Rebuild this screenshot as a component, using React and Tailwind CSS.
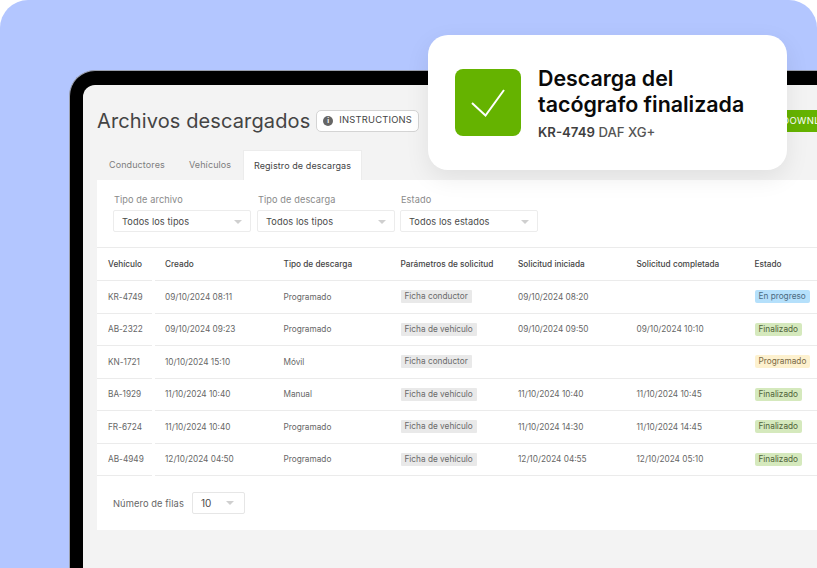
const rows = [
  ["KR-4749", "09/10/2024 08:11", "Programado", "Ficha conductor", "09/10/2024 08:20", "", "En progreso"],
  ["AB-2322", "09/10/2024 09:23", "Programado", "Ficha de vehículo", "09/10/2024 09:50", "09/10/2024 10:10", "Finalizado"],
  ["KN-1721", "10/10/2024 15:10", "Móvil", "Ficha conductor", "", "", "Programado"],
  ["BA-1929", "11/10/2024 10:40", "Manual", "Ficha de vehículo", "11/10/2024 10:40", "11/10/2024 10:45", "Finalizado"],
  ["FR-6724", "11/10/2024 10:40", "Programado", "Ficha de vehículo", "11/10/2024 14:30", "11/10/2024 14:45", "Finalizado"],
  ["AB-4949", "12/10/2024 04:50", "Programado", "Ficha de vehículo", "12/10/2024 04:55", "12/10/2024 05:10", "Finalizado"],
];

const statusClass = {
  "En progreso": "bg-[#b5e0fb] text-[#4c6a80]",
  Finalizado: "bg-[#d5e9bd] text-[#4f6239]",
  Programado: "bg-[#fdf1cf] text-[#7a6a45]",
};

function Caret() {
  return <span className="w-0 h-0 border-l-[4px] border-r-[4px] border-t-[4px] border-l-transparent border-r-transparent border-t-[#cfcfcf]" />;
}

function Select({ label, value, className }) {
  return (
    <div className={className}>
      <div className="h-[17px] pl-[1px] pt-[1px] text-[9.2px] leading-[12px] text-[#8a8a8a] tracking-[0.1px]">{label}</div>
      <div className="h-[22px] flex items-center justify-between pl-[8px] pr-[8px] pt-[1px] bg-white border border-[#ececec] rounded-[2px] text-[9.2px] text-[#4a4a4a] tracking-[0.1px]">
        <span>{value}</span>
        <Caret />
      </div>
    </div>
  );
}

function Row({ cells, head }) {
  const line = "border-b border-[#ebebeb]";
  const base = head ? "font-medium text-[#444]" : "text-[#666]";
  return (
    <div className={`flex items-stretch text-[8.25px] ${base} ${head ? "h-[33px]" : "h-[32.5px]"}`}>
      <div className={`w-[55px] shrink-0 pl-[11px] flex items-center ${line}`}>{cells[0]}</div>
      <div className={`flex-1 ml-[3px] pl-[10px] flex items-center ${line}`}>
        <div className="w-[118.5px] shrink-0">{cells[1]}</div>
        <div className="w-[117px] shrink-0">{cells[2]}</div>
        <div className="w-[117.5px] shrink-0">
          {head ? cells[3] : (
            <span className="inline-block px-[4px] py-[1px] bg-[#e9e9e9] rounded-[1px] text-[#6a6a6a] leading-[11px]">{cells[3]}</span>
          )}
        </div>
        <div className="w-[118.5px] shrink-0">{cells[4]}</div>
        <div className="w-[118px] shrink-0">{cells[5]}</div>
        <div className="flex-1 whitespace-nowrap">
          {head ? cells[6] : (
            <span className={`inline-block px-[4px] py-[1px] rounded-[2px] leading-[11px] ${statusClass[cells[6]]}`}>{cells[6]}</span>
          )}
        </div>
      </div>
    </div>
  );
}

export default function App() {
  return (
    <div className="relative w-[817px] h-[568px] overflow-hidden bg-white" style={{ fontFamily: "Inter, 'Liberation Sans', sans-serif" }}>
      <div className="w-full h-full bg-[#b3c6ff] rounded-t-[28px] pl-[69px] pt-[70px]">
        <div className="w-[780px] h-[498px] bg-black rounded-tl-[26px] border-t-[1px] border-l-[1px] border-[#9a9fae] pl-[13px] pt-[14px]">
          <div className="w-[766px] h-[484px] bg-[#f3f3f3] rounded-tl-[12px] pl-[14px] overflow-hidden">
            <div className="h-[65px] flex items-center pt-[6px] gap-[6px] whitespace-nowrap">
              <h1 className="text-[20px] leading-[28px] text-[#444] tracking-[0.12px] shrink-0">Archivos descargados</h1>
              <div className="w-[103px] h-[22px] shrink-0 flex items-center pl-[6px] gap-[6px] bg-white border border-[#d4d4d4] rounded-[5px] text-[9.4px] text-[#444] tracking-[0.2px]">
                <span className="w-[10px] h-[10px] rounded-full bg-[#666] text-white text-[7px] leading-[10px] text-center font-bold">i</span>
                INSTRUCTIONS
              </div>
              <div className="ml-[345px] w-[60px] h-[22px] shrink-0 bg-[#65b300] text-white text-[9.5px] leading-[22px] pl-[12px] tracking-[0.3px]">DOWNLOAD</div>
            </div>
            <div className="h-[30px] flex items-stretch text-[9px] text-[#7d7d7d] tracking-[0.1px]">
              <div className="w-[80px] pl-[12px] flex items-center">Conductores</div>
              <div className="w-[66px] pl-[12px] flex items-center">Vehículos</div>
              <div className="w-[119px] bg-white flex items-center justify-center text-[#444] border-t border-r border-l border-[#ececec]">Registro de descargas</div>
            </div>
            <div className="w-[720px] h-[350px] bg-white overflow-hidden">
              <div className="h-[67px] pl-[16px] pt-[13px] flex gap-[6px]">
                <Select className="w-[138px]" label="Tipo de archivo" value="Todos los tipos" />
                <Select className="w-[138px]" label="Tipo de descarga" value="Todos los tipos" />
                <Select className="w-[138px] ml-[-1px]" label="Estado" value="Todos los estados" />
              </div>
              <div className="w-[740px] border-t border-[#ebebeb]">
                <Row head cells={["Vehículo", "Creado", "Tipo de descarga", "Parámetros de solicitud", "Solicitud iniciada", "Solicitud completada", "Estado"]} />
                {rows.map((r) => <Row key={r[0]} cells={r} />)}
              </div>
              <div className="pl-[16px] pt-[16px] flex items-center gap-[8px] text-[9.3px] text-[#666] tracking-[0.1px]">
                <span className="pt-[1px]">Número de filas</span>
                <div className="w-[53px] h-[22px] flex items-center justify-between pl-[8px] pr-[10px] border border-[#e6e6e6] rounded-[2px] text-[#4a4a4a] text-[10px]">
                  <span>10</span>
                  <Caret />
                </div>
              </div>
            </div>
          </div>
        </div>
      </div>

      <div className="absolute left-[428px] top-[35px] w-[359px] h-[135px] bg-white rounded-[20px] shadow-[0_8px_24px_rgba(0,0,0,0.08)] flex items-center pl-[27px] gap-[17px]">
        <div className="w-[66px] h-[67px] bg-[#65b300] rounded-[8px] flex items-center justify-center">
          <svg width="34" height="28" viewBox="0 0 34 28" fill="none" stroke="white" strokeWidth="2">
            <path d="M1 14 L14.5 26.5 L33 1" />
          </svg>
        </div>
        <div className="pt-[3px]">
          <div className="text-[21.4px] leading-[25.5px] font-semibold text-[#0a0a0a]">Descarga del<br />tacógrafo finalizada</div>
          <div className="mt-[5px] text-[13.2px] leading-[20px] font-medium text-[#555]"><span className="font-semibold text-[#3f3f3f]">KR-4749</span> DAF XG+</div>
        </div>
      </div>
    </div>
  );
}
